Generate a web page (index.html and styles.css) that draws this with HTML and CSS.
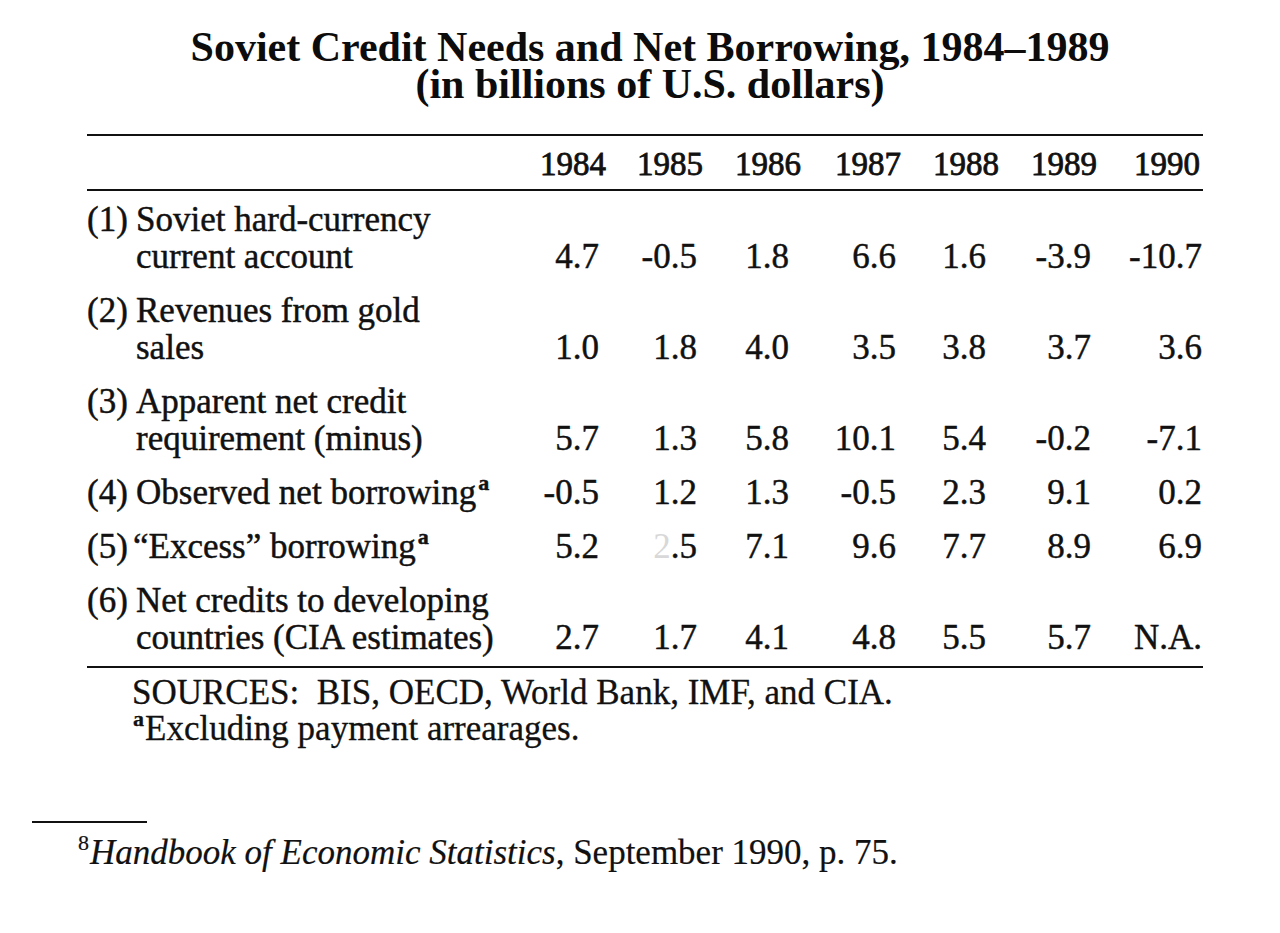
FILE: index.html
```html
<!DOCTYPE html>
<html lang="en">
<head>
<meta charset="utf-8">
<title>Soviet Credit Needs and Net Borrowing, 1984–1989</title>
<link rel="stylesheet" href="styles.css">
</head>
<body>
<div class="page">
  <header class="title">
    <h1><span class="tl">Soviet Credit Needs and Net Borrowing, 1984–1989</span><span class="tl">(in billions of U.S. dollars)</span></h1>
  </header>

  <section class="table">
    <div class="row head">
      <div class="label"></div>
      <div class="yr">1984</div>
      <div class="yr">1985</div>
      <div class="yr">1986</div>
      <div class="yr">1987</div>
      <div class="yr">1988</div>
      <div class="yr">1989</div>
      <div class="yr">1990</div>
    </div>

    <div class="body">
      <div class="row">
        <div class="label"><span class="num">(1)</span><span class="text"><span class="ln">Soviet hard-currency</span><span class="ln">current account</span></span></div>
        <div class="val">4.7</div>
        <div class="val">-0.5</div>
        <div class="val">1.8</div>
        <div class="val">6.6</div>
        <div class="val">1.6</div>
        <div class="val">-3.9</div>
        <div class="val">-10.7</div>
      </div>

      <div class="row">
        <div class="label"><span class="num">(2)</span><span class="text"><span class="ln">Revenues from gold</span><span class="ln">sales</span></span></div>
        <div class="val">1.0</div>
        <div class="val">1.8</div>
        <div class="val">4.0</div>
        <div class="val">3.5</div>
        <div class="val">3.8</div>
        <div class="val">3.7</div>
        <div class="val">3.6</div>
      </div>

      <div class="row">
        <div class="label"><span class="num">(3)</span><span class="text"><span class="ln">Apparent net credit</span><span class="ln">requirement (minus)</span></span></div>
        <div class="val">5.7</div>
        <div class="val">1.3</div>
        <div class="val">5.8</div>
        <div class="val">10.1</div>
        <div class="val">5.4</div>
        <div class="val">-0.2</div>
        <div class="val">-7.1</div>
      </div>

      <div class="row">
        <div class="label"><span class="num">(4)</span><span class="text"><span class="ln">Observed net borrowing<span class="sup-a">a</span></span></span></div>
        <div class="val">-0.5</div>
        <div class="val">1.2</div>
        <div class="val">1.3</div>
        <div class="val">-0.5</div>
        <div class="val">2.3</div>
        <div class="val">9.1</div>
        <div class="val">0.2</div>
      </div>

      <div class="row">
        <div class="label"><span class="num">(5)</span><span class="text quoted"><span class="ln">“Excess” borrowing<span class="sup-a">a</span></span></span></div>
        <div class="val">5.2</div>
        <div class="val"><span class="faded">2</span>.5</div>
        <div class="val">7.1</div>
        <div class="val">9.6</div>
        <div class="val">7.7</div>
        <div class="val">8.9</div>
        <div class="val">6.9</div>
      </div>

      <div class="row">
        <div class="label"><span class="num">(6)</span><span class="text"><span class="ln">Net credits to developing</span><span class="ln">countries (CIA estimates)</span></span></div>
        <div class="val">2.7</div>
        <div class="val">1.7</div>
        <div class="val">4.1</div>
        <div class="val">4.8</div>
        <div class="val">5.5</div>
        <div class="val">5.7</div>
        <div class="val">N.A.</div>
      </div>
    </div>
  </section>

  <div class="notes">
    <p>SOURCES:&nbsp; BIS, OECD, World Bank, IMF, and CIA.</p>
    <p><span class="sup-a note-a">a</span>Excluding payment arrearages.</p>
  </div>

  <div class="foot-rule"></div>
  <p class="footnote"><span class="sup-8">8</span><em>Handbook of Economic Statistics</em>, September 1990, p. 75.</p>
</div>
</body>
</html>
```

FILE: styles.css
```css
body {
  margin: 0;
  background: #fff;
  color: #111;
  font-family: "Liberation Serif", "Times New Roman", serif;
}

.page {
  width: 1280px;
  height: 933px;
  overflow: hidden;
}

.title {
  margin: 0 0 0 97px;
  width: 1106px;
  padding-top: 29px;
  text-align: center;
}

.title h1 {
  margin: 0;
  font-size: 42px;
  line-height: 37px;
  font-weight: bold;
  color: #0c0c0c;
}

.tl {
  display: block;
}

.table {
  margin: 31px 0 0 87px;
  width: 1116px;
  border-top: 2px solid #111;
  border-bottom: 2px solid #111;
  -webkit-text-stroke: 0.45px #111;
}

.row {
  display: grid;
  grid-template-columns: 443px 70px 98px 92px 107px 90px 105px 111px;
  align-items: last baseline;
}

.head {
  padding: 10px 0 6px;
  border-bottom: 2px solid #111;
  font-size: 33px;
  line-height: 37px;
  -webkit-text-stroke: 0.8px #111;
}

.yr {
  justify-self: end;
  white-space: nowrap;
}

.head .yr:nth-child(2) { margin-right: -6px; }
.head .yr:nth-child(3) { margin-right: -5px; }
.head .yr:nth-child(4) { margin-right: -11px; }
.head .yr:nth-child(5) { margin-right: -4px; }
.head .yr:nth-child(6) { margin-right: -12px; }
.head .yr:nth-child(7) { margin-right: -5px; }
.head .yr:nth-child(8) { margin-right: 3px; }

.body {
  padding: 10px 0;
  display: flex;
  flex-direction: column;
  gap: 17px;
  font-size: 35px;
  line-height: 37px;
}

.label {
  display: flex;
  white-space: nowrap;
}

.num {
  width: 49px;
  flex: none;
}

.text {
  display: flex;
  flex-direction: column;
}

.quoted {
  margin-left: -3px;
}

.ln {
  display: block;
}

.val {
  justify-self: end;
  margin-right: 1px;
  white-space: nowrap;
}

.faded {
  color: #d8d8d8;
  -webkit-text-stroke: 0;
}

.sup-a {
  font-family: "Liberation Serif", "Times New Roman", serif;
  font-weight: bold;
  font-size: 22px;
  line-height: 0;
  vertical-align: 14px;
  margin-left: 2px;
}

.notes {
  margin: 7px 0 0 132px;
  font-size: 35px;
  line-height: 36px;
  -webkit-text-stroke: 0.3px #111;
}

.notes p {
  margin: 0;
}

.note-a {
  margin-left: 1px;
  margin-right: 1px;
}

.foot-rule {
  margin: 74px 0 0 32px;
  width: 115px;
  border-top: 2px solid #111;
}

.footnote {
  margin: 12px 0 0 78px;
  font-size: 35px;
  line-height: 36px;
  -webkit-text-stroke: 0.2px #111;
}

.footnote em {
  font-style: italic;
}

.sup-8 {
  font-size: 22px;
  line-height: 0;
  vertical-align: 14px;
  margin-right: 1px;
}
```
